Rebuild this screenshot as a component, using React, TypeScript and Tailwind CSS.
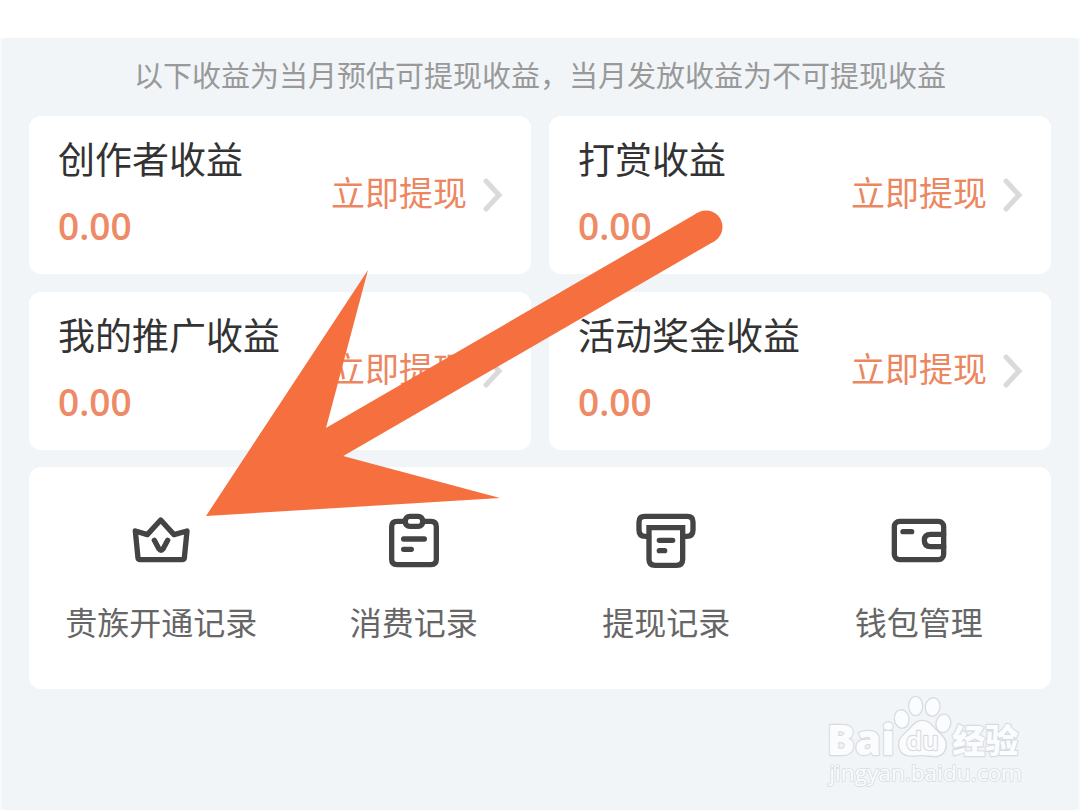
import type { ReactNode } from "react";

interface Income {
  title: string;
  amount: string;
}

interface RecordItem {
  label: string;
  icon: ReactNode;
}

const incomes: Income[] = [
  { title: "创作者收益", amount: "0.00" },
  { title: "打赏收益", amount: "0.00" },
  { title: "我的推广收益", amount: "0.00" },
  { title: "活动奖金收益", amount: "0.00" },
];

const iconProps = {
  className: "h-16 w-16",
  fill: "none",
  stroke: "#444",
  strokeWidth: 16,
  strokeLinecap: "round" as const,
  strokeLinejoin: "round" as const,
  "aria-hidden": true,
};

const records: RecordItem[] = [
  {
    label: "贵族开通记录",
    icon: (
      <svg viewBox="57 27 192 192" {...iconProps}>
        <path d="M76 93 112 104 152 60 192 104 231 93 223 174Q222 179 217 179H90Q85 179 84 174Z" />
        <path d="M133 121 147 147Q153 155 159 147L173 121" />
      </svg>
    ),
  },
  {
    label: "消费记录",
    icon: (
      <svg viewBox="36 27 192 192" {...iconProps}>
        <path d="M106 64H81Q65 64 65 80V178Q65 194 81 194H183Q199 194 199 178V80Q199 64 183 64H158" />
        <rect x="106" y="49" width="52" height="30" rx="13" />
        <path d="M101 117H163M101 148H124" />
      </svg>
    ),
  },
  {
    label: "提现记录",
    icon: (
      <svg viewBox="42 27 192 192" {...iconProps}>
        <path d="M86 109H76Q57 109 57 90V66Q57 49 74 49H202Q219 49 219 66V90Q219 109 200 109H190" />
        <path d="M87 83H188V178Q188 196 170 196H105Q87 196 87 178Z" strokeLinejoin="miter" />
        <path d="M118 121H158M118 152H134" />
      </svg>
    ),
  },
  {
    label: "钱包管理",
    icon: (
      <svg viewBox="36 27 192 192" {...iconProps}>
        <rect x="58" y="64" width="148" height="115" rx="16" />
        <path d="M84 95H110M206 103H167Q148 103 148 121Q148 140 167 140H206" />
      </svg>
    ),
  },
];

function IncomeCard({ title, amount }: Income) {
  return (
    <article className="flex items-center justify-between rounded-xl bg-white pt-[18px] pr-[28px] pb-6 pl-[29px]">
      <div className="flex flex-col gap-5">
        <h2 className="text-[37px] leading-[48px] whitespace-nowrap text-[#333]">{title}</h2>
        <p className="font-['Open_Sans',sans-serif] text-[37px] leading-[48px] font-semibold text-[#ee8a66]">{amount}</p>
      </div>
      <button type="button" className="flex items-end gap-4 text-[34px] leading-[44px] whitespace-nowrap text-[#ec8660]">
        立即提现
        <svg className="h-9 w-5" viewBox="0 0 20 36" fill="none" stroke="#dadada" strokeWidth="5" strokeLinecap="round" aria-hidden="true">
          <path d="M3 3 16 17 3 31" />
        </svg>
      </button>
    </article>
  );
}

function PointerArrow() {
  return (
    <svg
      className="pointer-events-none absolute top-[210px] left-[200px] h-[310px] w-[530px]"
      viewBox="200 210 530 310"
      fill="#f66f3f"
      aria-hidden="true"
    >
      <path d="M206 516 368 270 326 428 343 456 500 498Z" />
      <path d="M300 462 706 227" stroke="#f66f3f" strokeWidth="33" />
      <circle cx="706" cy="227" r="16.5" />
    </svg>
  );
}

function Watermark() {
  return (
    <svg
      className="mt-1 ml-auto h-[100px] w-[268px]"
      viewBox="0 36 804 300"
      fill="#fbfcfe"
      stroke="#d8dce0"
      strokeWidth="7"
      strokeLinejoin="round"
      aria-label="Baidu 经验"
    >
      <g strokeWidth="4">
        <ellipse cx="275" cy="114" rx="22" ry="28" transform="rotate(-10 275 114)" />
        <ellipse cx="317" cy="75" rx="21" ry="29" />
        <ellipse cx="368" cy="78" rx="22" ry="28" transform="rotate(10 368 78)" />
        <ellipse cx="400" cy="127" rx="22" ry="28" transform="rotate(10 400 127)" />
        <path d="M337 118C312 118 303 142 284 157C267 171 261 190 270 208C283 232 312 224 337 224C362 224 387 237 404 211C415 190 406 171 390 157C371 141 362 118 337 118Z" />
      </g>
      <g style={{ paintOrder: "stroke" }}>
        <text x="50" y="223" className="font-['Open_Sans',sans-serif] text-[126px] font-extrabold">Bai</text>
        <text x="288" y="208" className="font-['Open_Sans',sans-serif] text-[78px] font-semibold">du</text>
        <text x="427" y="215" className="font-['Noto_Sans_CJK_SC',sans-serif] text-[99px] font-black">经验</text>
        <text x="58" y="301" strokeWidth="5" className="font-['Open_Sans',sans-serif] text-[68px]">jingyan.baidu.com</text>
      </g>
    </svg>
  );
}

export default function App() {
  return (
    <div className="relative flex min-h-screen flex-col bg-white pt-[38px] font-['Noto_Sans_CJK_SC',sans-serif]">
      <main className="flex flex-1 flex-col border-x-2 border-[#f7fafb] bg-[#f1f5f8]">
        <p className="pt-4 pb-[22px] text-center text-[29px] leading-[40px] text-[#999]">
          以下收益为当月预估可提现收益，当月发放收益为不可提现收益
        </p>

        <section className="grid grid-cols-2 gap-[18px] px-[27px]">
          {incomes.map((income) => (
            <IncomeCard key={income.title} {...income} />
          ))}
        </section>

        <nav className="mx-[27px] mt-[17px] grid grid-cols-4 rounded-xl bg-white px-[6px] pt-[42px] pb-[44px]">
          {records.map((item) => (
            <a key={item.label} href="#" className="flex flex-col items-center gap-6">
              {item.icon}
              <span className="text-[32px] leading-[48px] whitespace-nowrap text-[#666]">{item.label}</span>
            </a>
          ))}
        </nav>

        <Watermark />
      </main>

      <PointerArrow />
    </div>
  );
}
